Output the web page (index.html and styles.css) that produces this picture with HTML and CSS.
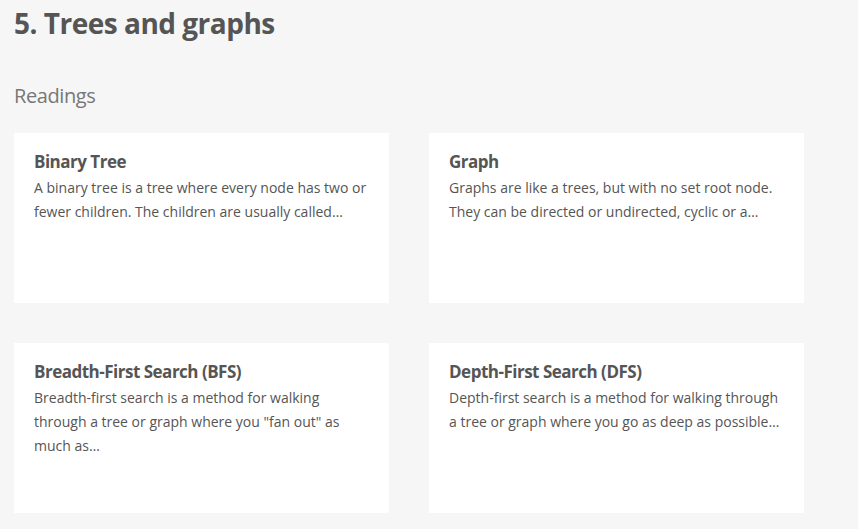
FILE: index.html
```html
<!DOCTYPE html>
<html>
<head>
<meta charset="utf-8">
<link rel="stylesheet" href="styles.css">
</head>
<body>
<main class="page">
  <h1 class="section-title">5. Trees and graphs</h1>
  <h2 class="sub-title">Readings</h2>
  <div class="cards">
    <div class="card">
      <h3 class="card-title">Binary Tree</h3>
      <p class="card-text">A binary tree is a tree where every node has two or fewer children. The children are usually called…</p>
    </div>
    <div class="card">
      <h3 class="card-title">Graph</h3>
      <p class="card-text">Graphs are like a trees, but with no set root node. They can be directed or undirected, cyclic or a…</p>
    </div>
    <div class="card">
      <h3 class="card-title">Breadth-First Search (BFS)</h3>
      <p class="card-text">Breadth-first search is a method for walking through a tree or graph where you "fan out" as much as…</p>
    </div>
    <div class="card">
      <h3 class="card-title">Depth-First Search (DFS)</h3>
      <p class="card-text">Depth-first search is a method for walking through a tree or graph where you go as deep as possible…</p>
    </div>
  </div>
</main>
</body>
</html>
```
FILE: styles.css
```css
html, body {
  margin: 0;
  padding: 0;
  background: #f6f6f6;
}
body {
  font-family: "Open Sans", "Noto Sans", sans-serif;
  color: #555;
}
.page {
  padding: 5px 14px 0;
}
.section-title {
  margin: 0;
  font-size: 28px;
  line-height: 36px;
  font-weight: 700;
  color: #555;
  letter-spacing: -0.5px;
}
.sub-title {
  margin: 41px 0 0;
  font-size: 20px;
  line-height: 28px;
  font-weight: 400;
  color: #777;
  letter-spacing: -0.4px;
}
.cards {
  margin-top: 23px;
  display: grid;
  grid-template-columns: 375px 375px;
  grid-auto-rows: 170px;
  column-gap: 40px;
  row-gap: 40px;
}
.card {
  background: #fff;
  padding: 17px 20px;
  box-sizing: border-box;
}
.card-title {
  margin: 0;
  font-size: 17px;
  line-height: 24px;
  font-weight: 700;
  color: #555;
  letter-spacing: -0.5px;
}
.card-text {
  margin: 2px 0 0;
  font-size: 14px;
  line-height: 24px;
  color: #555;
}
```
